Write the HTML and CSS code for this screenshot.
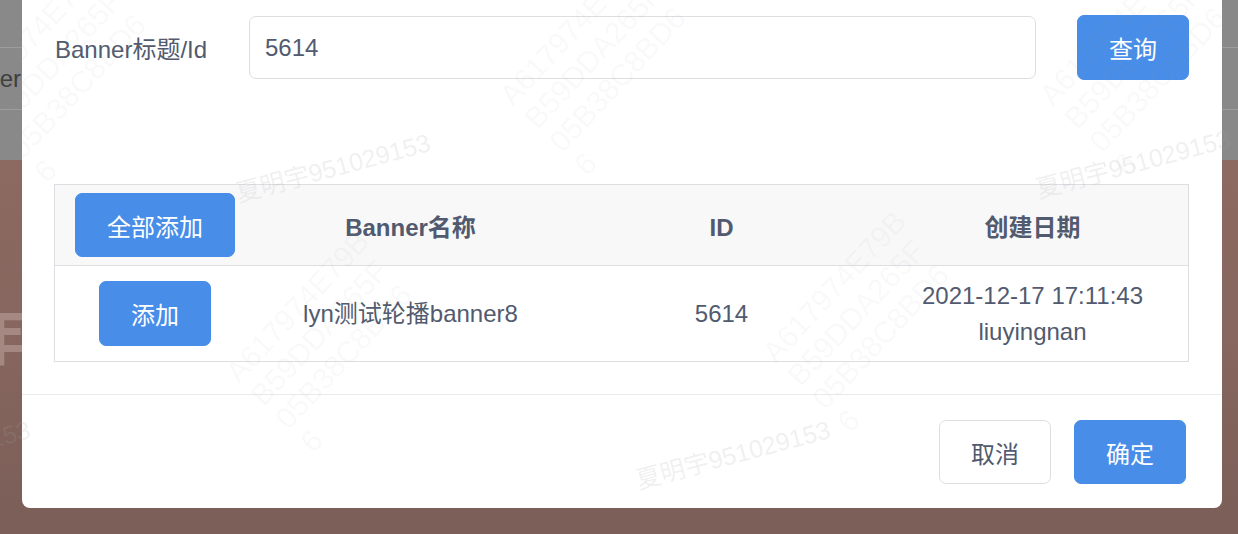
FILE: index.html
```html
<!DOCTYPE html>
<html lang="zh-CN">
<head>
<meta charset="utf-8">
<title>Banner 选择</title>
<link rel="stylesheet" href="styles.css">
</head>
<body>
<div class="page">
  <div class="page-head">
    <div class="head-row head-row-top"></div>
    <div class="head-row head-row-mid"><span class="head-text">Banner</span></div>
    <div class="head-row head-row-bottom"></div>
  </div>
  <div class="page-banner">
    <span class="banner-glyph">年</span>
  </div>
</div>

<div class="modal">
  <div class="modal-body">
    <div class="search">
      <label class="search-label" for="kw">Banner标题/Id</label>
      <input id="kw" class="search-input" type="text" value="5614">
      <button class="btn btn-primary search-btn">查询</button>
    </div>

    <div class="grid">
      <div class="row row-head">
        <div class="cell"><button class="btn btn-primary btn-wide">全部添加</button></div>
        <div class="cell th">Banner名称</div>
        <div class="cell th">ID</div>
        <div class="cell th">创建日期</div>
      </div>
      <div class="row row-body">
        <div class="cell"><button class="btn btn-primary btn-add">添加</button></div>
        <div class="cell">lyn测试轮播banner8</div>
        <div class="cell">5614</div>
        <div class="cell">2021-12-17 17:11:43<br>liuyingnan</div>
      </div>
    </div>
  </div>
  <div class="modal-footer">
    <button class="btn btn-default">取消</button>
    <button class="btn btn-primary">确定</button>
  </div>
</div>

<div class="watermarks" aria-hidden="true">
  <span class="wm-name wm-n1">夏明宇951029153</span>
  <span class="wm-name wm-n2">夏明宇951029153</span>
  <span class="wm-name wm-n3">夏明宇951029153</span>
  <span class="wm-name wm-n4">夏明宇951029153</span>
  <span class="wm-hex wm-h1">A617974E79B<br>B59DDA265F<br>05B38C8BD6<br>6</span>
  <span class="wm-hex wm-h2">A617974E79B<br>B59DDA265F<br>05B38C8BD6<br>6</span>
  <span class="wm-hex wm-h3">A617974E79B<br>B59DDA265F<br>05B38C8BD6<br>6</span>
  <span class="wm-hex wm-h4">A617974E79B<br>B59DDA265F<br>05B38C8BD6<br>6</span>
  <span class="wm-hex wm-h5">A617974E79B<br>B59DDA265F<br>05B38C8BD6<br>6</span>
</div>
</body>
</html>
```

FILE: styles.css
```css
* {
  box-sizing: border-box;
}

html, body {
  margin: 0;
  padding: 0;
}

body {
  width: 1238px;
  height: 534px;
  overflow: hidden;
  position: relative;
  font-family: "Liberation Sans", "Noto Sans CJK SC", sans-serif;
  color: #515a6e;
}

/* ---------- underlying page (seen through the mask) ---------- */
.page {
  height: 534px;
  display: flex;
  flex-direction: column;
}

.page-head {
  height: 160px;
  background: #898989;
  display: flex;
  flex-direction: column;
}

.head-row {
  border-bottom: 1px solid #9d9d9d;
}

.head-row-top {
  height: 48px;
}

.head-row-mid {
  height: 61px;
  width: 21px;
  overflow: hidden;
  display: flex;
  justify-content: flex-end;
  align-items: center;
  border-bottom: none;
}

.page-head .head-row-mid + .head-row-bottom {
  border-top: 1px solid #9d9d9d;
  border-bottom: none;
}

.head-text {
  font-size: 24px;
  color: #3e3e3e;
  white-space: nowrap;
  flex: none;
}

.head-row-bottom {
  flex: 1;
}

.page-banner {
  flex: 1;
  background: linear-gradient(180deg, #8c6961 0%, #86665f 50%, #7a5e57 100%);
  position: relative;
  overflow: hidden;
}

.banner-glyph {
  position: absolute;
  left: -34px;
  top: 148px;
  font-size: 62px;
  line-height: 1;
  font-weight: bold;
  color: rgba(235, 215, 210, 0.3);
}

/* ---------- modal ---------- */
.modal {
  position: absolute;
  left: 22px;
  top: -25px;
  width: 1200px;
  background: #fff;
  border-radius: 8px;
}

.modal-body {
  padding: 40px 33px 32px 32px;
}

.search {
  display: flex;
  align-items: center;
  height: 65px;
}

.search-label {
  width: 195px;
  padding-left: 1px;
  font-size: 24px;
  color: #515a6e;
  flex: none;
}

.search-input {
  flex: 1;
  min-width: 0;
  height: 63px;
  border: 1px solid #dcdee2;
  border-radius: 7px;
  padding: 0 15px;
  font-family: "Liberation Sans", "Noto Sans CJK SC", sans-serif;
  font-size: 24px;
  color: #515a6e;
  background: #fff;
  outline: none;
}

.btn {
  width: 112px;
  height: 64px;
  border-radius: 7px;
  border: 1px solid #dcdee2;
  font-family: "Liberation Sans", "Noto Sans CJK SC", sans-serif;
  font-size: 24px;
  padding: 0;
  cursor: pointer;
  flex: none;
}

.btn-primary {
  background: #488de8;
  border-color: #488de8;
  color: #fff;
}

.btn-default {
  background: #fff;
  color: #515a6e;
}

.search-btn {
  height: 65px;
  margin-left: 41px;
}

.btn-wide {
  width: 160px;
}

.btn-add {
  height: 65px;
}

/* ---------- table ---------- */
.grid {
  margin-top: 104px;
  border: 1px solid #dcdee2;
}

.row {
  display: grid;
  grid-template-columns: 200px repeat(3, 1fr);
}

.row-head {
  height: 81px;
  background: #f8f8f9;
  border-bottom: 1px solid #dcdee2;
}

.row-body {
  height: 95px;
}

.cell {
  display: flex;
  align-items: center;
  justify-content: center;
  text-align: center;
  font-size: 24px;
  line-height: 36px;
  color: #515a6e;
}

.th {
  font-weight: bold;
  padding-top: 6px;
}

/* ---------- footer ---------- */
.modal-footer {
  border-top: 1px solid #e8eaec;
  padding: 25px 36px 24px;
  display: flex;
  justify-content: flex-end;
  gap: 23px;
}

/* ---------- watermarks ---------- */
.watermarks {
  position: absolute;
  inset: 0;
  overflow: hidden;
  pointer-events: none;
}

.wm-name {
  position: absolute;
  font-size: 25px;
  line-height: 26px;
  white-space: nowrap;
  color: rgba(165, 165, 165, 0.17);
  transform-origin: 0 0;
  transform: rotate(-15deg);
}

.wm-n1 { left: 233px; top: 181px; }
.wm-n2 { left: 1033px; top: 177px; }
.wm-n3 { left: 633px; top: 468px; }
.wm-n4 { left: -167px; top: 468px; }

.wm-hex {
  position: absolute;
  font-size: 30px;
  line-height: 34px;
  white-space: nowrap;
  color: rgba(165, 165, 165, 0.07);
  transform-origin: 0 0;
  transform: rotate(-47deg);
}

.wm-h1 { left: 493px; top: 89px; }
.wm-h2 { left: 219px; top: 366px; }
.wm-h3 { left: 756px; top: 346px; }
.wm-h4 { left: 1033px; top: 89px; }
.wm-h5 { left: -47px; top: 96px; }
```
